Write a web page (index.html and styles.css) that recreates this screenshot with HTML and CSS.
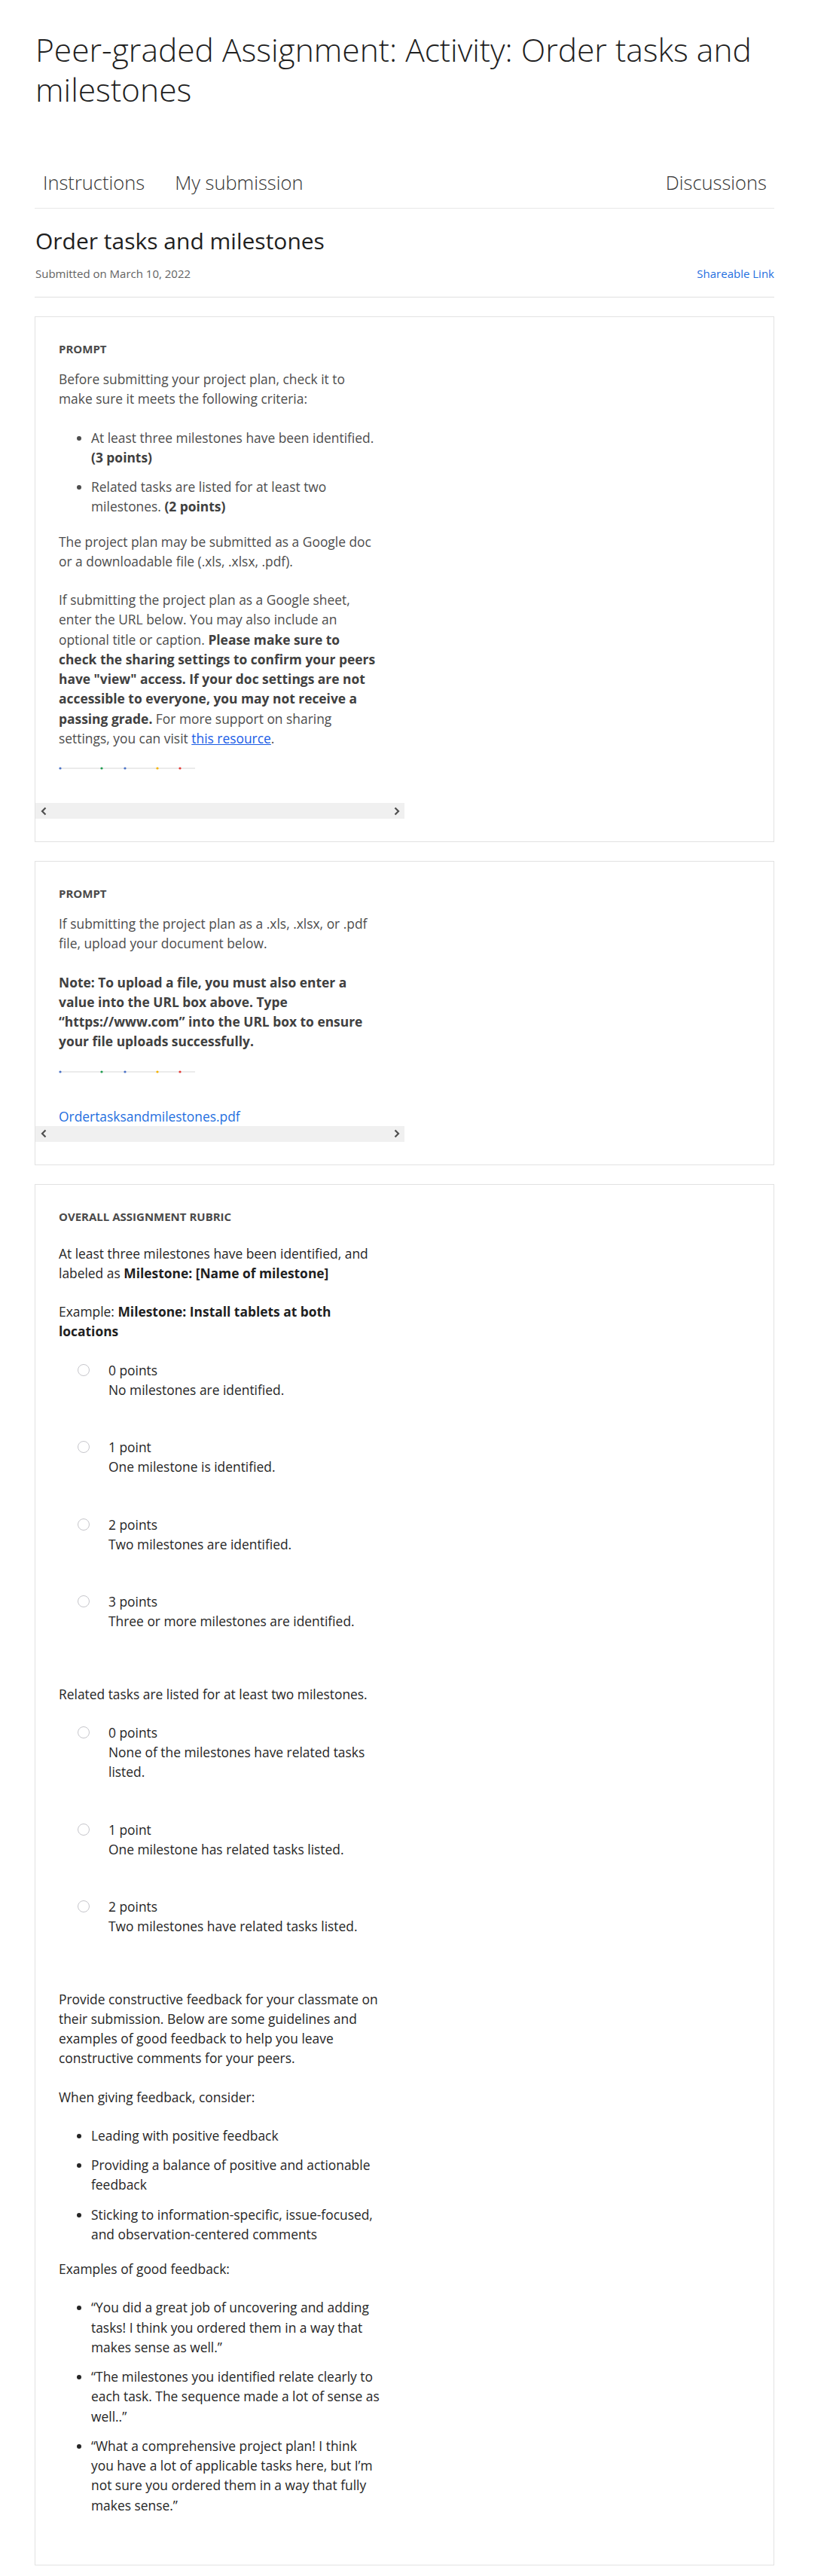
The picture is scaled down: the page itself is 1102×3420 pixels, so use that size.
FILE: index.html
```html
<!DOCTYPE html>
<html lang="en">
<head>
<meta charset="utf-8">
<title>Peer-graded Assignment: Activity: Order tasks and milestones</title>
<link rel="stylesheet" href="styles.css">
</head>
<body>
<div class="page">
  <h1 class="title">Peer-graded Assignment: Activity: Order tasks and milestones</h1>

  <nav class="tabs">
    <span class="tab">Instructions</span>
    <span class="tab">My submission</span>
    <span class="tab tab-right">Discussions</span>
  </nav>

  <h2 class="sub-title">Order tasks and milestones</h2>
  <div class="meta">
    <span class="meta-date">Submitted on March 10, 2022</span>
    <a class="meta-link" href="#">Shareable Link</a>
  </div>

  <section class="card">
    <div class="frame">
      <div class="frame-body">
        <div class="label">PROMPT</div>
        <p>Before submitting your project plan, check it to make sure it meets the following criteria:</p>
        <ul>
          <li>At least three milestones have been identified. <b>(3 points)</b></li>
          <li>Related tasks are listed for at least two milestones. <b>(2 points)</b></li>
        </ul>
        <p>The project plan may be submitted as a Google doc or a downloadable file (.xls, .xlsx, .pdf).</p>
        <p>If submitting the project plan as a Google sheet, enter the URL below. You may also include an optional title or caption. <b>Please make sure to check the sharing settings to confirm your peers have "view" access. If your doc settings are not accessible to everyone, you may not receive a passing grade.</b> For more support on sharing settings, you can visit <a class="inline-link" href="#">this resource</a>.</p>
        <svg class="dots" width="182" height="4" viewBox="0 0 182 4">
          <line x1="1" y1="2" x2="181" y2="2" stroke="#e4e4e4" stroke-width="1.5"/>
          <circle cx="2" cy="2" r="1.6" fill="#4a72c6"/>
          <circle cx="57" cy="2" r="1.6" fill="#1e9c4f"/>
          <circle cx="88" cy="2" r="1.6" fill="#4a72c6"/>
          <circle cx="131" cy="2" r="1.6" fill="#f5b400"/>
          <circle cx="161" cy="2" r="1.6" fill="#e53935"/>
        </svg>
      </div>
      <div class="hscroll">
        <svg class="chev" width="8" height="12" viewBox="0 0 8 12"><path d="M6.5 1.5 L2 6 L6.5 10.5" fill="none" stroke="#4f4f4f" stroke-width="2.2"/></svg>
        <svg class="chev" width="8" height="12" viewBox="0 0 8 12"><path d="M1.5 1.5 L6 6 L1.5 10.5" fill="none" stroke="#4f4f4f" stroke-width="2.2"/></svg>
      </div>
    </div>
  </section>

  <section class="card">
    <div class="frame">
      <div class="frame-body">
        <div class="label">PROMPT</div>
        <p>If submitting the project plan as a .xls, .xlsx, or .pdf file, upload your document below.</p>
        <p><b>Note: To upload a file, you must also enter a value into the URL box above. Type “https://www.com” into the URL box to ensure your file uploads successfully.</b></p>
        <svg class="dots" width="182" height="4" viewBox="0 0 182 4">
          <line x1="1" y1="2" x2="181" y2="2" stroke="#e4e4e4" stroke-width="1.5"/>
          <circle cx="2" cy="2" r="1.6" fill="#4a72c6"/>
          <circle cx="57" cy="2" r="1.6" fill="#1e9c4f"/>
          <circle cx="88" cy="2" r="1.6" fill="#4a72c6"/>
          <circle cx="131" cy="2" r="1.6" fill="#f5b400"/>
          <circle cx="161" cy="2" r="1.6" fill="#e53935"/>
        </svg>
        <a class="file-link" href="#">Ordertasksandmilestones.pdf</a>
      </div>
      <div class="hscroll">
        <svg class="chev" width="8" height="12" viewBox="0 0 8 12"><path d="M6.5 1.5 L2 6 L6.5 10.5" fill="none" stroke="#4f4f4f" stroke-width="2.2"/></svg>
        <svg class="chev" width="8" height="12" viewBox="0 0 8 12"><path d="M1.5 1.5 L6 6 L1.5 10.5" fill="none" stroke="#4f4f4f" stroke-width="2.2"/></svg>
      </div>
    </div>
  </section>

  <section class="card rubric">
    <div class="label rubric-label">OVERALL ASSIGNMENT RUBRIC</div>

    <div class="criterion">
      <p>At least three milestones have been identified, and labeled as <b>Milestone: [Name of milestone]</b></p>
      <p>Example: <b>Milestone: Install tablets at both locations</b></p>
      <div class="option"><span class="radio"></span><div class="opt-text">0 points<br>No milestones are identified.</div></div>
      <div class="option"><span class="radio"></span><div class="opt-text">1 point<br>One milestone is identified.</div></div>
      <div class="option"><span class="radio"></span><div class="opt-text">2 points<br>Two milestones are identified.</div></div>
      <div class="option"><span class="radio"></span><div class="opt-text">3 points<br>Three or more milestones are identified.</div></div>
    </div>

    <div class="criterion">
      <p>Related tasks are listed for at least two milestones.</p>
      <div class="option"><span class="radio"></span><div class="opt-text">0 points<br>None of the milestones have related tasks listed.</div></div>
      <div class="option"><span class="radio"></span><div class="opt-text">1 point<br>One milestone has related tasks listed.</div></div>
      <div class="option"><span class="radio"></span><div class="opt-text">2 points<br>Two milestones have related tasks listed.</div></div>
    </div>

    <div class="feedback">
      <p>Provide constructive feedback for your classmate on their submission. Below are some guidelines and examples of good feedback to help you leave constructive comments for your peers.</p>
      <p>When giving feedback, consider:</p>
      <ul>
        <li>Leading with positive feedback</li>
        <li>Providing a balance of positive and actionable feedback</li>
        <li>Sticking to information-specific, issue-focused, and observation-centered comments</li>
      </ul>
      <p>Examples of good feedback:</p>
      <ul>
        <li>“You did a great job of uncovering and adding tasks! I think you ordered them in a way that makes sense as well.”</li>
        <li>“The milestones you identified relate clearly to each task. The sequence made a lot of sense as well..”</li>
        <li>“What a comprehensive project plan! I think you have a lot of applicable tasks here, but I’m not sure you ordered them in a way that fully makes sense.”</li>
      </ul>
    </div>
  </section>
</div>
</body>
</html>
```

FILE: styles.css
```css
* { box-sizing: border-box; }

html, body {
  margin: 0;
  padding: 0;
  background: #ffffff;
}

body {
  font-family: "Open Sans", "Noto Sans", "Liberation Sans", sans-serif;
  color: #1f1f1f;
}

.page {
  width: 982px;
  margin-left: 46px;
  padding-top: 39px;
  padding-bottom: 16px;
}

.title {
  margin: 0;
  padding-left: 1px;
  font-size: 42.5px;
  font-weight: 300;
  line-height: 53px;
  color: #1f1f1f;
}

.tabs {
  display: flex;
  margin-top: 81px;
  padding-bottom: 18px;
  border-bottom: 1px solid #e8e8e8;
  gap: 19px;
}

.tab {
  padding: 0 10px 0 11px;
  font-size: 25.5px;
  font-weight: 300;
  line-height: 32px;
  color: #333333;
}

.tab-right {
  margin-left: auto;
}

.sub-title {
  margin: 25px 0 0;
  padding-left: 1px;
  font-size: 30px;
  font-weight: 400;
  line-height: 36px;
  color: #1f1f1f;
}

.meta {
  display: flex;
  justify-content: space-between;
  align-items: center;
  margin-top: 15px;
  padding-left: 1px;
  padding-bottom: 21px;
  border-bottom: 1px solid #e0e0e0;
  font-size: 15px;
  line-height: 20px;
}

.meta-date {
  color: #636363;
}

.meta-link {
  color: #1f6fe0;
  text-decoration: none;
}

.card {
  margin-top: 25px;
  border: 1px solid #e2e2e2;
  padding-bottom: 30px;
}

.frame {
  width: 490px;
}

.frame-body {
  padding: 32px 34px 0 31px;
  color: #4d4d4d;
}

.label {
  font-size: 15px;
  font-weight: 700;
  line-height: 20px;
  color: #4a4a4a;
  margin-bottom: 17px;
}

p {
  margin: 0 0 25px;
  font-size: 17.4px;
  line-height: 26.25px;
}

ul {
  margin: 0 0 20px;
  padding-left: 43px;
  font-size: 17.4px;
  line-height: 26.25px;
}

li + li {
  margin-top: 13px;
}

b {
  font-weight: 700;
}

.frame-body b {
  color: #404040;
}

.inline-link {
  color: #1a5ce6;
  text-decoration: underline;
}

.dots {
  display: block;
  margin-bottom: 44px;
}

.file-link {
  display: block;
  font-size: 17.4px;
  line-height: 26px;
  color: #1f6fe0;
  text-decoration: none;
}

.hscroll {
  display: flex;
  justify-content: space-between;
  align-items: center;
  height: 21px;
  padding: 0 6px 0 7px;
  background: #f0f0f0;
}

.chev {
  display: block;
}

.rubric {
  padding: 32px 0 46px 31px;
  color: #262626;
}

.rubric-label {
  margin-bottom: 26px;
  color: #4a4a4a;
}

.criterion,
.feedback {
  width: 428px;
}

.criterion {
  padding-bottom: 20px;
}

.rubric b {
  color: #1f1f1f;
}

.option {
  display: flex;
  align-items: flex-start;
  gap: 25px;
  margin-left: 25px;
  margin-bottom: 50px;
  font-size: 17.4px;
  line-height: 26.25px;
}

.radio {
  flex: none;
  width: 16px;
  height: 16px;
  margin-top: 5px;
  border: 1.5px solid #c6c6cb;
  border-radius: 50%;
  background: #fff;
}

.opt-text {
  width: 362px;
}
```
